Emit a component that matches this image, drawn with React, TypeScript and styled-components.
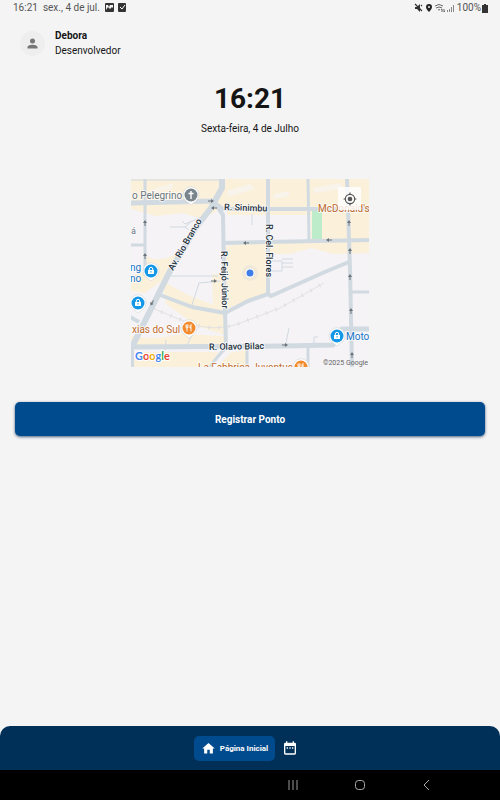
import React from "react";
import styled, { createGlobalStyle } from "styled-components";

const GlobalStyle = createGlobalStyle`
  * { box-sizing: border-box; }
  body { margin: 0; background: #f4f4f4; }
  button { font: inherit; border: 0; padding: 0; cursor: pointer; }
`;

const Screen = styled.div`
  display: flex;
  flex-direction: column;
  min-height: 100vh;
  background: #f4f4f4;
  color: #151515;
  font-family: Roboto, sans-serif;
`;

const StatusBar = styled.div`
  display: flex;
  justify-content: space-between;
  align-items: center;
  height: 16px;
  padding: 0 12px 0 13px;
  font-size: 10px;
  line-height: 16px;
  color: #555;
`;

const StatusGroup = styled.div<{ $gap: number }>`
  display: flex;
  align-items: center;
  gap: ${(p) => p.$gap}px;
`;

const Profile = styled.header`
  display: flex;
  align-items: center;
  gap: 10px;
  padding: 12px 20px 0;
`;

const Avatar = styled.div`
  display: grid;
  place-items: center;
  width: 25px;
  height: 25px;
  border-radius: 50%;
  background: #eeeeee;
`;

const ProfileLine = styled.div<{ $bold?: boolean }>`
  font-size: 10px;
  line-height: 15px;
  font-weight: ${(p) => (p.$bold ? 700 : 400)};
`;

const Main = styled.main`
  display: flex;
  flex: 1;
  flex-direction: column;
  align-items: center;
  padding: 24px 15px;
`;

const Clock = styled.h1`
  margin: 0;
  font-size: 28px;
  line-height: 34px;
  font-weight: 700;
`;

const DateText = styled.p`
  margin: 5px 0 0;
  font-size: 10px;
  line-height: 16px;
`;

const MapFrame = styled.section`
  position: relative;
  width: 238px;
  height: 188px;
  margin-top: 42px;
  overflow: hidden;
`;

const LocateButton = styled.button`
  position: absolute;
  top: 8px;
  right: 8px;
  display: grid;
  place-items: center;
  width: 23px;
  height: 23px;
  border-radius: 1px;
  background: rgba(255, 255, 255, 0.8);
`;

const RegisterButton = styled.button`
  align-self: stretch;
  height: 34px;
  margin-top: 35px;
  border-radius: 5px;
  background: #004b8d;
  color: #fff;
  && { font-size: 10px; font-weight: 700; }
  box-shadow: 0 1px 3px rgba(0, 35, 80, 0.7);
`;

const TabBar = styled.nav`
  display: flex;
  align-items: center;
  justify-content: center;
  gap: 7px;
  height: 44px;
  padding-right: 8px;
  border-radius: 10px 10px 0 0;
  background: #003058;
`;

const Tab = styled.button<{ $active?: boolean }>`
  display: flex;
  align-items: center;
  justify-content: center;
  gap: 4px;
  height: 25px;
  padding: 0 ${(p) => (p.$active ? 7 : 0)}px;
  border-radius: 5px;
  background: ${(p) => (p.$active ? "#004b8d" : "transparent")};
  color: #fff;
  && { font-size: 8px; font-weight: 700; }
`;

const SystemBar = styled.footer`
  display: flex;
  align-items: center;
  justify-content: flex-end;
  height: 30px;
  padding-right: 8%;
  background: #000;
`;

const SystemKeys = styled.div`
  display: grid;
  flex: 0 0 200px;
  grid-template-columns: repeat(3, 1fr);
`;

const SystemButton = styled.button`
  display: flex;
  justify-content: center;
  background: transparent;
`;

const roads: [string, number][] = [
  ["M0 1H90", 1],
  ["M0 24L84 22", 5],
  ["M84 24L92 30H238", 4],
  ["M14 0V97", 3],
  ["M0 66H14", 3],
  ["M91 -2V9L80 29L66 47L38 94L1 168", 6],
  ["M83 23L92 36L93 95L95 168", 4],
  ["M92 64L238 61", 4],
  ["M137 0V115", 4],
  ["M177 0L178 62", 3],
  ["M216 0L219 90L221 188", 4],
  ["M29 116L61 128L94 134L117 122L137 115L140 117L196 92L218 83", 4],
  ["M0 168L152 167L202 166L211 150H238", 5],
  ["M220 113H238", 3],
  ["M96 168Q88 175 79 188", 3],
  ["M116 168V188", 3],
  ["M177 168V188", 3],
  ["M-1 138L8 143", 4],
  ["M1 165V188", 4],
  ["M39 48H54L61 42M51 42L54 45L69 39M54 48L58 51", 1],
  ["M61 126L68 104L89 102M40 97H87", 1],
  ["M139 82H151V92H139M151 80H162M151 84H162M151 88H162", 1],
  ["M155 164L158 149M183 164V158H187", 1],
  ["M121 35V46M35 161L34 171M56 166L62 154", 1],
];

const blocks = [
  "M0 0H238V61L180 62V36H96V26L72 40L52 34L25 37L0 30Z",
  "M15 77Q29 85 47 74L36 98L14 114L0 112V97L15 92Z",
  "M31 102L59 117L94 130V156L66 147L35 125Z",
  "M81 95H94V130L82 126Z",
  "M95 67L138 62V114L96 130Z",
  "M138 62L238 61V74L203 75L180 69L158 75H138Z",
  "M0 157Q25 162 50 155L93 157V166H0Z",
  "M0 173H87L80 188H0Z",
  "M99 174L116 171V188H86Z",
];

const arrows: [number, number, number][] = [
  [80, 22, 90], [83, 29, 270], [14, 44, 0], [14, 77, 0], [115, 64, 270],
  [198, 61, 270], [218, 44, 0], [219, 72, 0], [219, 98, 0], [220, 132, 0],
  [154, 166, 90], [83, 102, 90], [21, 124, 210], [221, 176, 0],
];

const railway = "M21 129L60 145Q83 152 104 146L149 129L193 104";

function Pin({ x, y, color, kind }: { x: number; y: number; color: string; kind: "cross" | "bag" | "food" }) {
  return (
    <g transform={`translate(${x} ${y})`}>
      <path d="M0 10L-5 6A8 8 0 1 1 5 6Z" fill="#fff" stroke="#c9cdcf" strokeWidth=".5" />
      <circle r="6.5" fill={color} />
      {kind === "cross" && <path d="M0-4V4M-2.5-1.5H2.5" stroke="#fff" strokeWidth="1.4" />}
      {kind === "bag" && (
        <>
          <path d="M-3-1H3V3H-3Z" fill="#fff" />
          <path d="M-1.7-.5V-2A1.7 1.7 0 0 1 1.7-2V-.5" fill="none" stroke="#fff" />
          <path d="M-1 .5Q0 2 1 .5" fill="none" stroke={color} strokeWidth=".7" />
        </>
      )}
      {kind === "food" && (
        <path d="M-3-3.5V-1Q-3 0-2 0V3.5M-2-3.5V0M-1-3.5V-1Q-1 0-2 0M2 3.5V-3.5Q.7-3 1 0H2" fill="none" stroke="#fff" strokeWidth=".9" />
      )}
    </g>
  );
}

function StreetMap() {
  return (
    <svg width="238" height="188" viewBox="0 0 238 188" role="img" aria-label="Mapa da localização" fontFamily="Roboto, sans-serif">
      <rect width="238" height="188" fill="#f5f3f6" />
      {blocks.map((d) => <path key={d} d={d} fill="#fbf0d9" />)}
      <path d="M96 12L119 5L124 10L97 18ZM143 15L158 12V17L142 20ZM23 10L43 4L40 10L20 14ZM182 9L210 4V10L183 14Z" fill="#f8f4ec" />
      <path d="M181 31H191V60H181Z" fill="#bdecca" />
      <path d={railway} fill="none" stroke="#e2e2e2" strokeWidth="1" />
      <path d={railway} fill="none" stroke="#dedede" strokeWidth="4" strokeDasharray="1 9" />
      {roads.map(([d, w]) => <path key={d} d={d} fill="none" stroke="#d1dae1" strokeWidth={w} strokeLinejoin="round" />)}
      {arrows.map(([x, y, r]) => (
        <g key={`${x}-${y}`} transform={`translate(${x} ${y}) rotate(${r})`} fill="#6b7379">
          <path d="M-.5 3V-1H.5V3ZM-2 0L0-3L2 0Z" />
        </g>
      ))}
      <g fontSize="10" stroke="#fff" strokeOpacity=".7" strokeWidth="2" strokeLinejoin="round" paintOrder="stroke">
        <g fill="#69747c">
          <text x="1" y="20">o Pelegrino</text>
          <text x="0" y="55" fontSize="9">á</text>
        </g>
        <g fill="#1673c4">
          <text x="-1" y="92">ng</text>
          <text x="-1" y="103">no</text>
          <text x="215" y="161">Moto</text>
        </g>
        <g fill="#c26a2a">
          <text x="187" y="33">McDonald's</text>
          <text x="1" y="154">xias do Sul</text>
          <text x="67" y="192">La Fabbrica Juventus</text>
        </g>
        <g fill="#26323e" fontSize="9" fontWeight="500">
          <text x="93" y="31" transform="rotate(2 93 31)">R. Sinimbu</text>
          <text x="78" y="171" transform="rotate(-1 78 171)">R. Olavo Bilac</text>
          <text transform="translate(42 92) rotate(-60)">Av. Rio Branco</text>
          <text transform="translate(90 72) rotate(89)">R. Feijó Júnior</text>
          <text transform="translate(135 45) rotate(90)">R. Cel. Flores</text>
        </g>
      </g>
      <Pin x={60} y={16} color="#79858c" kind="cross" />
      <Pin x={20} y={92} color="#1597e8" kind="bag" />
      <Pin x={7} y={124} color="#1597e8" kind="bag" />
      <Pin x={206} y={157} color="#1597e8" kind="bag" />
      <Pin x={58} y={149} color="#f28b2d" kind="food" />
      <Pin x={170} y={188} color="#f28b2d" kind="food" />
      <circle cx="119" cy="94" r="8" fill="#4285f4" opacity=".06" />
      <circle cx="119" cy="94" r="4.5" fill="#fff" />
      <circle cx="119" cy="94" r="3.5" fill="#3f7de8" />
      <text x="4" y="181" fontFamily="Lato, sans-serif" fontSize="11" fontWeight="700" stroke="#fff" strokeWidth="2" paintOrder="stroke">
        <tspan fill="#4285f4">G</tspan><tspan fill="#ea4335">o</tspan><tspan fill="#e8ad00">o</tspan>
        <tspan fill="#4285f4">g</tspan><tspan fill="#34a853">l</tspan><tspan fill="#ea4335">e</tspan>
      </text>
      <text x="237" y="186" textAnchor="end" fontSize="7" fill="#666">©2025 Google</text>
    </svg>
  );
}

function StatusIcons() {
  return (
    <svg width="42" height="10" viewBox="0 0 42 10" aria-hidden="true">
      <path d="M1 4H3L6 1V9L3 6H1Z" fill="#333" />
      <path d="M1 1L8 8M7 3L8 2" stroke="#333" strokeWidth="1.2" />
      <path d="M15 1A3 3 0 0 0 12 4C12 6 15 9 15 9S18 6 18 4A3 3 0 0 0 15 1ZM15 3A1 1 0 1 1 15 5A1 1 0 0 1 15 3Z" fill="#222" fillRule="evenodd" />
      <path d="M21 3Q25 0 29 3M22 5Q25 3 28 5M24 7Q25 6 26 7M28 9V6M27 7L28 6M30 6V9L31 8" fill="none" stroke="#666" />
      <path d="M33.5 9V7M35.5 9V6M37.5 9V4M39.5 9V2" stroke="#888" />
    </svg>
  );
}

export default function App() {
  return (
    <Screen>
      <GlobalStyle />
      <StatusBar>
        <StatusGroup $gap={5}>
          <span>16:21</span>
          <span>sex., 4 de jul.</span>
          <svg width="22" height="10" viewBox="0 0 22 10" aria-hidden="true">
            <rect x="0" y="0" width="9" height="9" rx="1" fill="#333" />
            <path d="M1 7L3 4L5 6L7 4L8 5V2H5L4 4L3 2H1Z" fill="#f4f4f4" />
            <rect x="13" y="0" width="8" height="9" rx="1" fill="#333" />
            <path d="M15 4L17 6L20 2" fill="none" stroke="#fff" />
          </svg>
        </StatusGroup>
        <StatusGroup $gap={1}>
          <StatusIcons />
          <StatusGroup $gap={1}>
            <span>100%</span>
            <svg width="6" height="9" viewBox="0 0 6 9" aria-hidden="true"><path d="M0 1H2V0H4V1H6V9H0Z" fill="#333" /></svg>
          </StatusGroup>
        </StatusGroup>
      </StatusBar>
      <Profile>
        <Avatar>
          <svg width="15" height="15" viewBox="0 0 24 24" fill="#777" aria-hidden="true">
            <circle cx="12" cy="8" r="4" /><path d="M4 18C4 15 9 14 12 14S20 15 20 18V20H4Z" />
          </svg>
        </Avatar>
        <div>
          <ProfileLine $bold>Debora</ProfileLine>
          <ProfileLine>Desenvolvedor</ProfileLine>
        </div>
      </Profile>
      <Main>
        <Clock>16:21</Clock>
        <DateText>Sexta-feira, 4 de Julho</DateText>
        <MapFrame>
          <StreetMap />
          <LocateButton aria-label="Minha localização">
            <svg width="14" height="14" viewBox="0 0 24 24" fill="none" stroke="#555" strokeWidth="2" aria-hidden="true">
              <circle cx="12" cy="12" r="8" /><circle cx="12" cy="12" r="4" fill="#555" stroke="none" />
              <path d="M12 1V4M12 20V23M1 12H4M20 12H23" />
            </svg>
          </LocateButton>
        </MapFrame>
        <RegisterButton>Registrar Ponto</RegisterButton>
      </Main>
      <TabBar>
        <Tab $active>
          <svg width="15" height="15" viewBox="0 0 24 24" fill="#fff" aria-hidden="true"><path d="M10 20V14H14V20H19V12H22L12 3L2 12H5V20Z" /></svg>
          Página Inicial
        </Tab>
        <Tab aria-label="Calendário">
          <svg width="16" height="16" viewBox="0 0 24 24" aria-hidden="true">
            <path d="M19 4H18V2H16V4H8V2H6V4H5Q3 4 3 6V20Q3 22 5 22H19Q21 22 21 20V6Q21 4 19 4ZM19 20H5V9H19Z" fill="#fff" />
            <path d="M7 11H9V13H7ZM11 11H13V13H11ZM15 11H17V13H15Z" fill="#fff" />
          </svg>
        </Tab>
      </TabBar>
      <SystemBar>
        <SystemKeys>
          <SystemButton aria-label="Recentes">
            <svg width="12" height="12" viewBox="0 0 12 12" stroke="#999"><path d="M2 1V11M6 1V11M10 1V11" /></svg>
          </SystemButton>
          <SystemButton aria-label="Início">
            <svg width="12" height="12" viewBox="0 0 12 12" stroke="#aaa" fill="none"><rect x="1.5" y="1.5" width="9" height="9" rx="3" /></svg>
          </SystemButton>
          <SystemButton aria-label="Voltar">
            <svg width="12" height="12" viewBox="0 0 12 12" stroke="#aaa" fill="none"><path d="M8 1L3 6L8 11" /></svg>
          </SystemButton>
        </SystemKeys>
      </SystemBar>
    </Screen>
  );
}
